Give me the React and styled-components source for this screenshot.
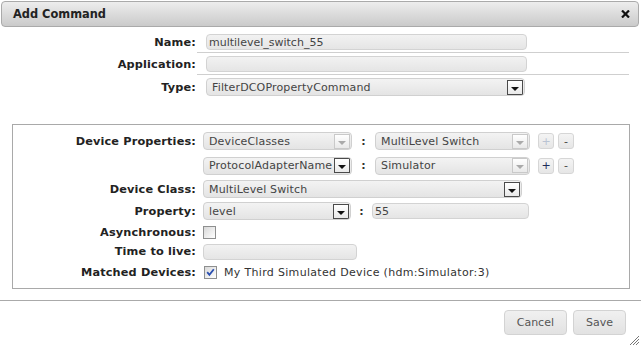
import React from "react";
import styled, { createGlobalStyle } from "styled-components";

const Global = createGlobalStyle`
  html, body { margin: 0; padding: 0; background: #fff; }
  body { font-family: "DejaVu Sans", Verdana, sans-serif; font-size: 11px; color: #222; }
  * { box-sizing: border-box; }
`;

const Dialog = styled.div`
  position: relative;
  width: 641px;
  height: 347px;
  padding-top: 1px;
  overflow: hidden;
  background: #fff;
`;

const TitleBar = styled.div`
  margin: 0 2px 0 1px;
  height: 26px;
  border: 1px solid #aaa;
  border-radius: 4px;
  background: linear-gradient(#ededed, #cacaca);
  display: flex;
  align-items: center;
  justify-content: space-between;
  padding: 0 8px 0 11px;
`;

const Title = styled.span`
  font-weight: bold;
  font-size: 11.4px;
  color: #222;
`;

const CloseIcon = () => (
  <svg width="9" height="8" viewBox="0 0 9 8" style={{ display: "block" }}>
    <path d="M1 0.5 L8 7.5 M8 0.5 L1 7.5" stroke="#111" strokeWidth="2.2" />
  </svg>
);

const TopForm = styled.div`
  padding-top: 4px;
`;

const TopRow = styled.div`
  display: grid;
  grid-template-columns: 196px 432px;
  column-gap: 1px;
`;

const Label = styled.div`
  text-align: right;
  align-self: center;
  font-weight: bold;
  font-size: 11.3px;
  letter-spacing: 0.15px;
  color: #222;
  white-space: nowrap;
`;

const TopCell = styled.div`
  padding: 3px 0 2px 9px;
  border-bottom: 1px solid ${(p) => (p.$line ? "#cfcfcf" : "transparent")};
  display: flex;
  align-items: center;
`;

const TextInput = styled.input`
  display: block;
  width: ${(p) => p.$w}px;
  height: ${(p) => p.$h || 16}px;
  margin: 0;
  padding: 0 2px;
  border: 1px solid #d3d3d3;
  border-radius: 4px;
  background: linear-gradient(#f2f2f2, #e5e5e5);
  font: inherit;
  font-size: 11px;
  color: #444;
  outline: none;
`;

const SelectBox = styled.div`
  display: flex;
  align-items: center;
  width: ${(p) => p.$w}px;
  height: 18px;
  padding-left: 5px;
  padding-right: 1px;
  border: 1px solid #d0d0d0;
  border-radius: 4px;
  background: linear-gradient(#f3f3f3, #e4e4e4);
  color: #444;
  font-size: 11px;
  letter-spacing: 0.15px;
  white-space: nowrap;
  overflow: hidden;
`;

const SelectText = styled.span`
  flex: 1;
  overflow: hidden;
`;

const ArrowBox = styled.span`
  flex: none;
  width: 16px;
  height: 15px;
  border: 1px solid ${(p) => (p.$off ? "#c9c9c9" : "#4a4a4a")};
  background: linear-gradient(#ffffff, #e9e9e9);
  display: flex;
  align-items: center;
  justify-content: center;
  &::after {
    content: "";
    margin-top: 3px;
    border-left: 4px solid transparent;
    border-right: 4px solid transparent;
    border-top: 4px solid ${(p) => (p.$off ? "#aaa" : "#111")};
  }
`;

const Select = ({ w, value, off }) => (
  <SelectBox $w={w}>
    <SelectText>{value}</SelectText>
    <ArrowBox $off={off} />
  </SelectBox>
);

const FieldBox = styled.div`
  margin: 25px 0 0 12px;
  width: 618px;
  border: 1px solid #a9a9a9;
  padding: 6px 0 8px 0;
  display: flex;
  flex-direction: column;
  gap: 4px;
`;

const FRow = styled.div`
  display: grid;
  grid-template-columns: 183px 1fr;
  column-gap: 7px;
  align-items: center;
  height: ${(p) => p.$h}px;
`;

const Value = styled.div`
  display: flex;
  align-items: center;
`;

const Sep = styled.span`
  width: ${(p) => p.$w}px;
  text-align: center;
  font-weight: bold;
  color: #333;
`;

const MiniBtn = styled.span`
  width: 16px;
  height: 16px;
  margin-left: ${(p) => p.$ml}px;
  border: 1px solid #d6d6d6;
  border-radius: 3px;
  background: linear-gradient(#f4f4f4, #e6e6e6);
  display: flex;
  align-items: center;
  justify-content: center;
  font-size: 11px;
  line-height: 1;
  color: ${(p) => p.$c};
`;

const Check = styled.span`
  display: inline-flex;
  align-items: center;
  justify-content: center;
  width: 13px;
  height: 13px;
  margin-left: ${(p) => p.$ml || 0}px;
  border: 1px solid #8e8f8f;
  background: linear-gradient(135deg, #d8d8d8, #ffffff);
`;

const CheckMark = () => (
  <svg width="9" height="9" viewBox="0 0 9 9" style={{ display: "block" }}>
    <path d="M1.2 4.2 L3.4 6.8 L7.8 1.2" fill="none" stroke="#2a4fb0" strokeWidth="1.8" />
  </svg>
);

const DeviceText = styled.span`
  margin-left: 7px;
  color: #333;
  letter-spacing: 0.32px;
`;

const ButtonPane = styled.div`
  margin-top: 11px;
  border-top: 1px solid #aaa;
  padding: 9px 15px 0 0;
  display: flex;
  justify-content: flex-end;
  gap: 6px;
`;

const Button = styled.button`
  height: 25px;
  padding: 0 12px;
  margin: 0;
  border: 1px solid #d3d3d3;
  border-radius: 4px;
  background: linear-gradient(#f0f0f0, #e2e2e2);
  font-family: "DejaVu Sans", Verdana, sans-serif;
  font-size: 11px;
  color: #555;
`;

const Grip = styled.svg`
  position: absolute;
  right: 1px;
  bottom: 1px;
`;

export default function App() {
  return (
    <>
      <Global />
      <Dialog>
        <TitleBar>
          <Title>Add Command</Title>
          <CloseIcon />
        </TitleBar>

        <TopForm>
          <TopRow>
            <Label>Name:</Label>
            <TopCell $line>
              <TextInput $w={321} readOnly value="multilevel_switch_55" />
            </TopCell>
          </TopRow>
          <TopRow>
            <Label>Application:</Label>
            <TopCell $line>
              <TextInput $w={321} readOnly value="" />
            </TopCell>
          </TopRow>
          <TopRow>
            <Label>Type:</Label>
            <TopCell>
              <Select w={319} value="FilterDCOPropertyCommand" />
            </TopCell>
          </TopRow>
        </TopForm>

        <FieldBox>
          <FRow $h={20}>
            <Label>Device Properties:</Label>
            <Value>
              <Select w={149} value="DeviceClasses" off />
              <Sep $w={23}>:</Sep>
              <Select w={155} value="MultiLevel Switch" off />
              <MiniBtn $ml={8} $c="#b9c3d3">+</MiniBtn>
              <MiniBtn $ml={4} $c="#444">-</MiniBtn>
            </Value>
          </FRow>
          <FRow $h={21}>
            <Label />
            <Value>
              <Select w={149} value="ProtocolAdapterName" />
              <Sep $w={23}>:</Sep>
              <Select w={155} value="Simulator" off />
              <MiniBtn $ml={8} $c="#1c2c5a">+</MiniBtn>
              <MiniBtn $ml={4} $c="#444">-</MiniBtn>
            </Value>
          </FRow>
          <FRow $h={17}>
            <Label>Device Class:</Label>
            <Value>
              <Select w={319} value="MultiLevel Switch" />
            </Value>
          </FRow>
          <FRow $h={20}>
            <Label>Property:</Label>
            <Value>
              <Select w={148} value="level" />
              <Sep $w={21}>:</Sep>
              <TextInput $w={157} $h={16} readOnly value="55" />
            </Value>
          </FRow>
          <FRow $h={14}>
            <Label>Asynchronous:</Label>
            <Value>
              <Check />
            </Value>
          </FRow>
          <FRow $h={17}>
            <Label>Time to live:</Label>
            <Value>
              <TextInput $w={154} $h={16} readOnly value="" />
            </Value>
          </FRow>
          <FRow $h={16}>
            <Label>Matched Devices:</Label>
            <Value>
              <Check $ml={1}>
                <CheckMark />
              </Check>
              <DeviceText>My Third Simulated Device (hdm:Simulator:3)</DeviceText>
            </Value>
          </FRow>
        </FieldBox>

        <ButtonPane>
          <Button>Cancel</Button>
          <Button>Save</Button>
        </ButtonPane>

        <Grip width="12" height="12" viewBox="0 0 12 12">
          <path d="M11 2 L2 11 M11 5 L5 11 M11 8 L8 11" stroke="#777" strokeWidth="1" />
        </Grip>
      </Dialog>
    </>
  );
}
